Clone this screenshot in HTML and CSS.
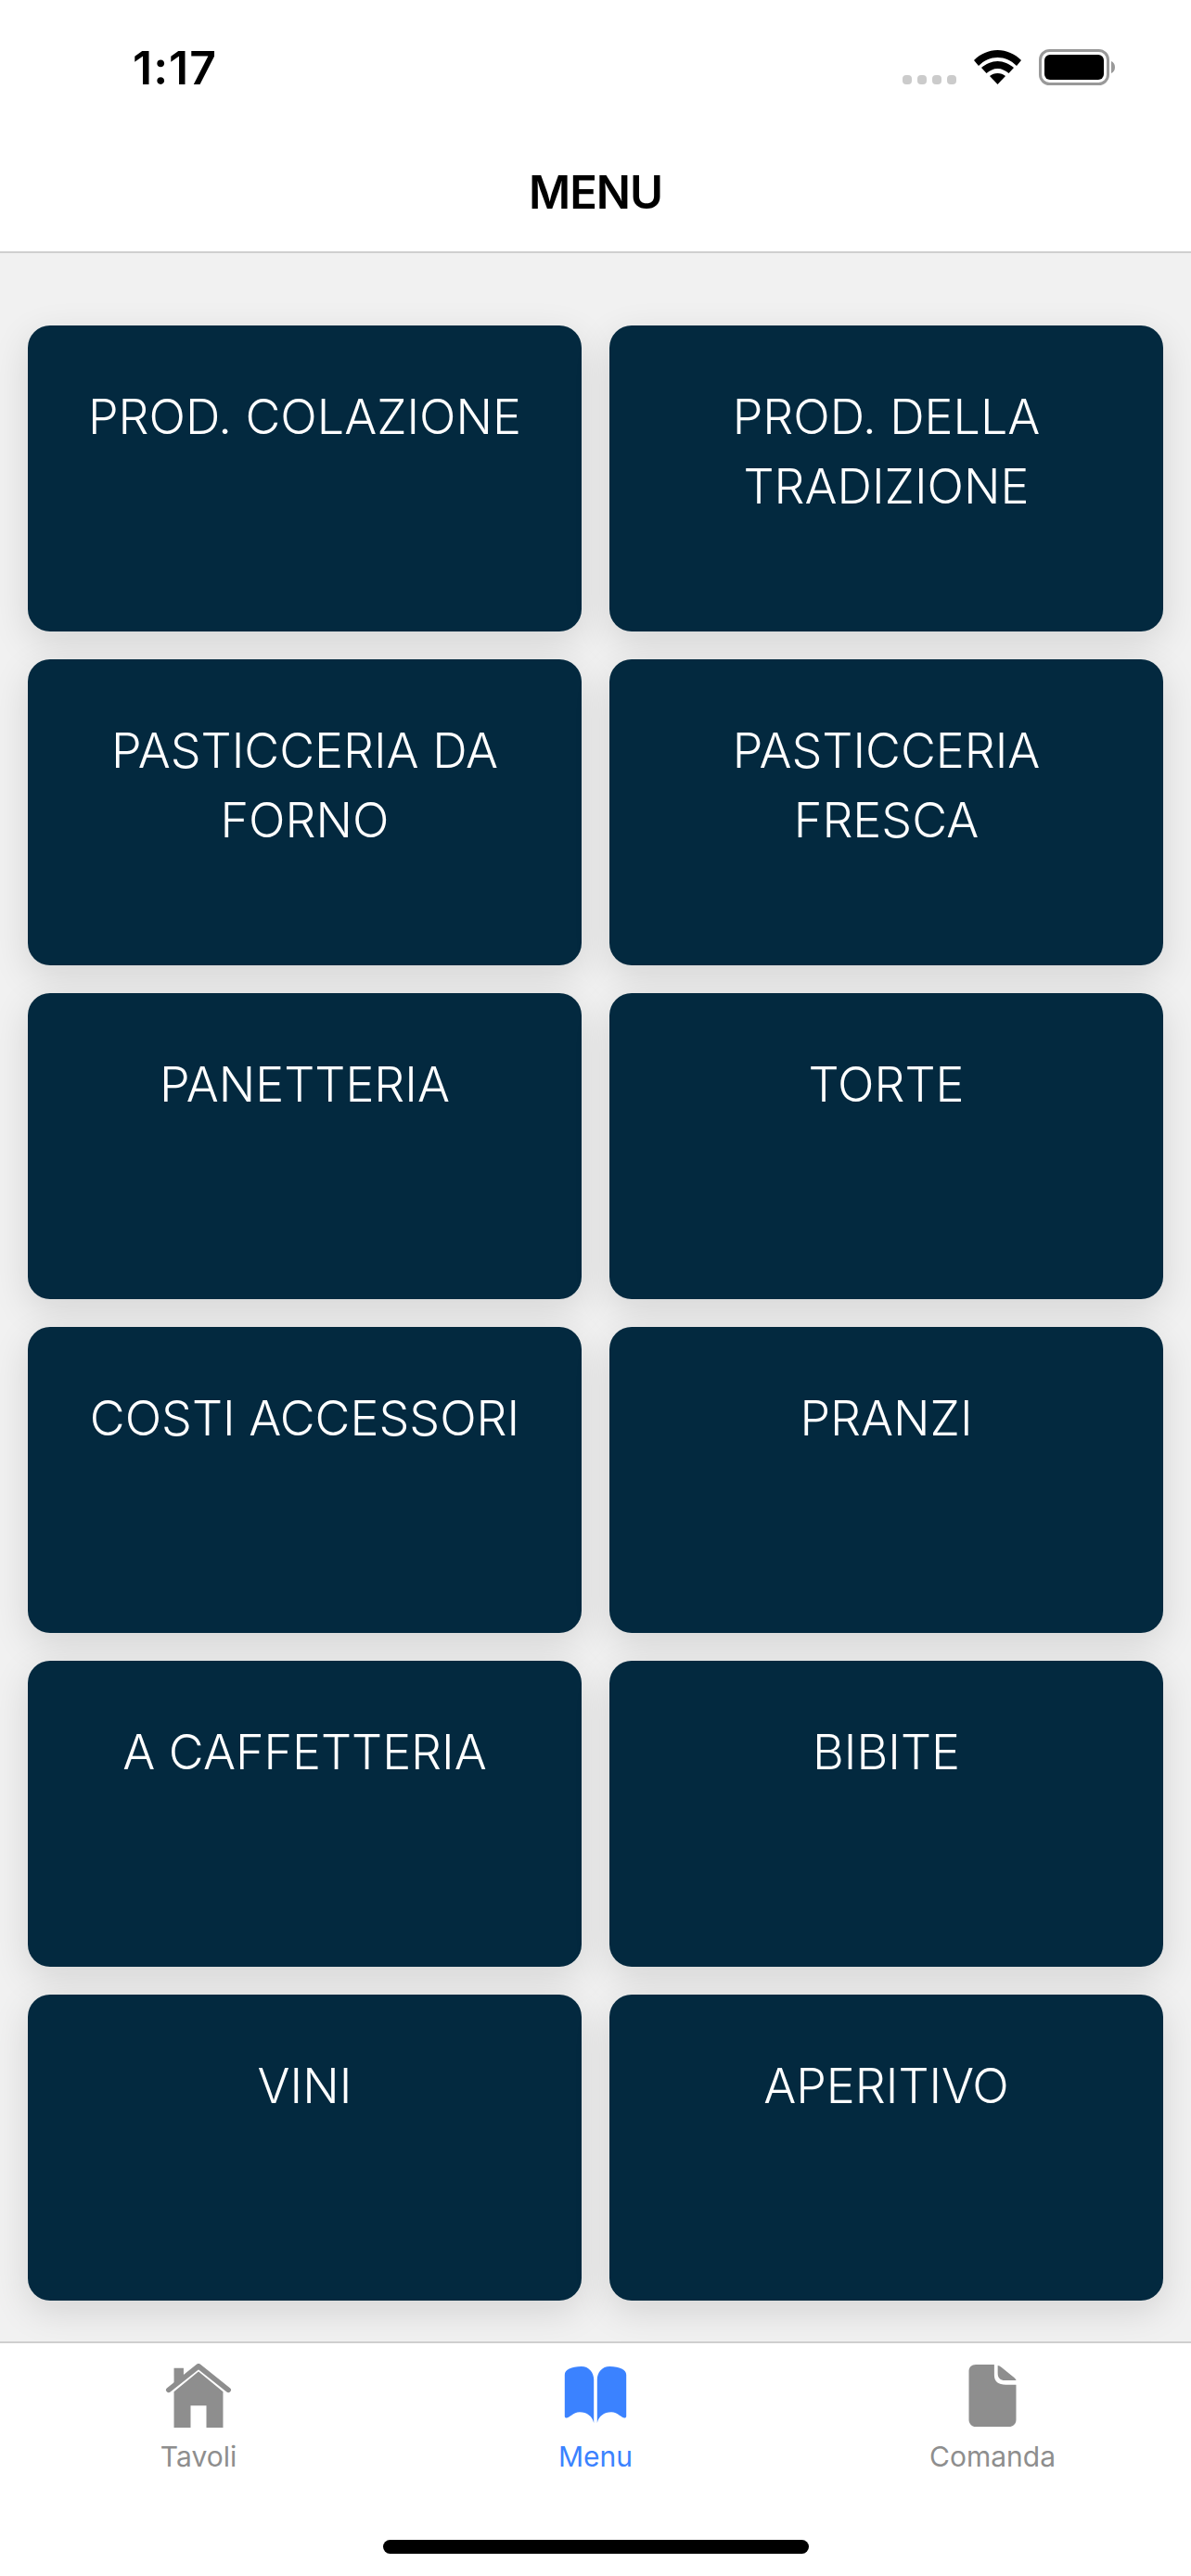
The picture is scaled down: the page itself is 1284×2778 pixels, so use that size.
FILE: index.html
```html
<!DOCTYPE html>
<html lang="it">
<head>
<meta charset="utf-8">
<title>Menu</title>
<link rel="stylesheet" href="styles.css">
</head>
<body>
<div class="app">
  <header class="top">
    <div class="status">
      <span class="time">1:17</span>
      <div class="status-icons">
        <div class="signal"><i></i><i></i><i></i><i></i></div>
        <svg class="wifi" viewBox="0 0 51 37"><path d="M25.5 0C35 0 44 4 51 11L46 17C40 11 33 8 25.5 8C18 8 11 11 5 17L0 11C7 4 16 0 25.5 0Z"/><path d="M25.5 12C32 12 38 15 43 19L37.5 25C34 22 30 20 25.5 20C21 20 17 22 13.5 25L8 19C13 15 19 12 25.5 12Z"/><path d="M25.5 25C29 25 31.5 26 34 28L25.5 37L17 28C19.5 26 22 25 25.5 25Z"/></svg>
        <svg class="battery" viewBox="0 0 82 39"><rect x="1.5" y="1.5" width="73" height="36" rx="10" fill="none" stroke="#999" stroke-width="3"/><rect x="6" y="6" width="64" height="27" rx="6"/><path d="M78 13C80.500 14 82 16.500 82 19.500C82 22.500 80.500 25 78 26Z" fill="#999"/></svg>
      </div>
    </div>
    <h1 class="title">MENU</h1>
  </header>
  <main class="content">
    <div class="grid">
      <div class="card">PROD. COLAZIONE</div>
      <div class="card">PROD. DELLA TRADIZIONE</div>
      <div class="card">PASTICCERIA DA FORNO</div>
      <div class="card">PASTICCERIA FRESCA</div>
      <div class="card">PANETTERIA</div>
      <div class="card">TORTE</div>
      <div class="card">COSTI ACCESSORI</div>
      <div class="card">PRANZI</div>
      <div class="card">A CAFFETTERIA</div>
      <div class="card">BIBITE</div>
      <div class="card">VINI</div>
      <div class="card">APERITIVO</div>
    </div>
  </main>
  <nav class="tabs">
    <div class="tab-row">
      <div class="tab">
        <svg class="tab-icon house" viewBox="0 0 74 73"><path d="M9 5H20V14L9 23Z"/><path d="M3 30L37 3L71 30" fill="none" stroke="#8e8e8e" stroke-width="6" stroke-linecap="round" stroke-linejoin="round"/><path d="M37 9L65 32V73H46V48H28V73H9V32Z"/></svg>
        <span class="tab-label">Tavoli</span>
      </div>
      <div class="tab active">
        <svg class="tab-icon book" viewBox="0 0 74 68"><path d="M0 10C0 4 8 0 20 0C29 0 35 7 35 16V68C33 60 27 55 18 55C10 55 6 62 2 62C1 62 0 61 0 60Z"/><path d="M74 10C74 4 66 0 54 0C45 0 39 7 39 16V68C41 60 47 55 56 55C64 55 68 62 72 62C73 62 74 61 74 60Z"/></svg>
        <span class="tab-label">Menu</span>
      </div>
      <div class="tab">
        <svg class="tab-icon file" viewBox="0 0 54 71"><path d="M8 0H29V12C29 20 34 23 42 23H54V63C54 68 50 71 46 71H8C3 71 0 67 0 63V8C0 3 3 0 8 0Z"/><path d="M33 1C34 1 36 2 37 3L52 15C53 16 54 17 54 18H41C36 18 33 15 33 10Z"/></svg>
        <span class="tab-label">Comanda</span>
      </div>
    </div>
    <div class="home-indicator"></div>
  </nav>
</div>
</body>
</html>
```

FILE: styles.css
```css
* { box-sizing: border-box; }
html, body { margin: 0; padding: 0; background: #f1f1f1; }
body { font-family: Inter, "Liberation Sans", sans-serif; }

.app {
  width: 1284px;
  height: 2778px;
  display: flex;
  flex-direction: column;
  overflow: hidden;
}

.top {
  height: 273px;
  background: #fff;
  border-bottom: 2px solid #cfcfcf;
  flex: none;
}

.status {
  height: 144px;
  padding: 45px 82px 0 143px;
  display: flex;
  justify-content: space-between;
  align-items: flex-start;
}

.time {
  font-size: 50px;
  line-height: 56px;
  font-weight: 600;
  letter-spacing: 1px;
  color: #000;
}

.status-icons {
  display: flex;
  align-items: flex-end;
  margin-top: 8px;
}

.signal { display: flex; gap: 5.5px; margin-right: 19px; margin-bottom: 1px; }
.signal i { width: 10.500px; height: 10.500px; border-radius: 4px; background: #cbcbcb; display: block; }

.wifi { width: 51px; height: 37px; margin-right: 19px; margin-bottom: 1px; fill: #000; }
.battery { width: 82px; height: 39px; fill: #000; }

.title {
  margin: 0;
  text-align: center;
  font-size: 49px;
  line-height: 60px;
  font-weight: 600;
  letter-spacing: -1px;
  color: #000;
  margin-top: 34px;
}

.content {
  flex: 1;
  background: #f1f1f1;
  padding: 78px 30px 0;
}

.grid {
  display: grid;
  grid-template-columns: 597px 597px;
  grid-auto-rows: 330px;
  gap: 30px;
}

.card {
  background: #03293f;
  border-radius: 24px;
  color: #fff;
  text-align: center;
  font-size: 52px;
  font-weight: 350;
  letter-spacing: 0;
  line-height: 75px;
  padding: 61px 30px 0;
  box-shadow: 0 12px 40px rgba(0, 0, 0, 0.12);
}

.tabs {
  height: 253px;
  flex: none;
  background: #fff;
  border-top: 2px solid #cfcfcf;
  position: relative;
}

.tab-row {
  display: grid;
  grid-template-columns: repeat(3, 428px);
  padding-top: 20px;
}

.tab {
  display: flex;
  flex-direction: column;
  align-items: center;
  color: #8e8e8e;
  fill: #8e8e8e;
  height: 120px;
}

.tab.active { color: #3b82ff; fill: #3b82ff; }

.tab-icon { display: block; }
.house { width: 74px; height: 73px; margin-top: 2px; }
.book { width: 74px; height: 68px; margin-top: 5px; margin-bottom: 5px; }
.file { width: 54px; height: 71px; margin-top: 3px; margin-bottom: 1px; }

.tab-label {
  font-size: 30px;
  line-height: 36px;
  margin-top: 13px;
}

.home-indicator {
  position: absolute;
  left: 413px;
  top: 212px;
  width: 459px;
  height: 15px;
  border-radius: 8px;
  background: #000;
}
```
